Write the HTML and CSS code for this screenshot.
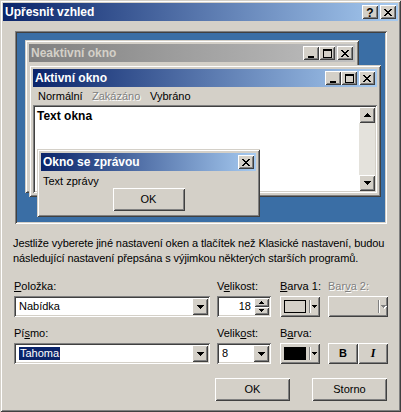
FILE: index.html
```html
<!DOCTYPE html>
<html lang="cs">
<head>
<meta charset="utf-8">
<title>Upřesnit vzhled</title>
<link rel="stylesheet" href="styles.css">
</head>
<body>
<div class="dialog">
  <div class="caption cap-active">
    <span class="cap-text">Upřesnit vzhled</span>
    <span class="cbtn cbtn-help">?</span>
    <span class="cbtn cbtn-close"><svg width="8" height="7" viewBox="0 0 8 7"><path d="M0 0h2v1h-2zM6 0h2v1h-2zM1 1h2v1h-2zM5 1h2v1h-2zM2 2h4v1h-4zM3 3h2v1h-2zM2 4h4v1h-4zM1 5h2v1h-2zM5 5h2v1h-2zM0 6h2v1h-2zM6 6h2v1h-2z"/></svg></span>
  </div>
  <div class="client">
    <div class="preview">
      <div class="desktop">
        <div class="win win-inactive">
          <div class="caption cap-inactive">
            <span class="cap-text">Neaktivní okno</span>
            <span class="cbtn"><svg width="9" height="9" viewBox="0 0 9 9"><path d="M1 7h6v2h-6z"/></svg></span>
            <span class="cbtn"><svg width="9" height="9" viewBox="0 0 9 9"><path fill-rule="evenodd" d="M0 0h9v9h-9zM1 2v6h7v-6z"/></svg></span>
            <span class="cbtn cbtn-close"><svg width="8" height="7" viewBox="0 0 8 7"><path d="M0 0h2v1h-2zM6 0h2v1h-2zM1 1h2v1h-2zM5 1h2v1h-2zM2 2h4v1h-4zM3 3h2v1h-2zM2 4h4v1h-4zM1 5h2v1h-2zM5 5h2v1h-2zM0 6h2v1h-2zM6 6h2v1h-2z"/></svg></span>
          </div>
        </div>
        <div class="win win-active">
          <div class="caption cap-active">
            <span class="cap-text">Aktivní okno</span>
            <span class="cbtn"><svg width="9" height="9" viewBox="0 0 9 9"><path d="M1 7h6v2h-6z"/></svg></span>
            <span class="cbtn"><svg width="9" height="9" viewBox="0 0 9 9"><path fill-rule="evenodd" d="M0 0h9v9h-9zM1 2v6h7v-6z"/></svg></span>
            <span class="cbtn cbtn-close"><svg width="8" height="7" viewBox="0 0 8 7"><path d="M0 0h2v1h-2zM6 0h2v1h-2zM1 1h2v1h-2zM5 1h2v1h-2zM2 2h4v1h-4zM3 3h2v1h-2zM2 4h4v1h-4zM1 5h2v1h-2zM5 5h2v1h-2zM0 6h2v1h-2zM6 6h2v1h-2z"/></svg></span>
          </div>
          <div class="menubar">
            <span class="mi mi-1">Normální</span>
            <span class="mi mi-2 is-disabled">Zakázáno</span>
            <span class="mi mi-3">Vybráno</span>
          </div>
          <div class="textbox">
            <div class="textbox-text">Text okna</div>
            <div class="vscroll">
              <span class="sbtn"><svg width="7" height="4" viewBox="0 0 7 4"><path d="M3 0h1v1h1v1h1v1h1v1h-7v-1h1v-1h1v-1h1z"/></svg></span>
              <span class="track"></span>
              <span class="sbtn"><svg width="7" height="4" viewBox="0 0 7 4"><path d="M0 0h7v1h-1v1h-1v1h-1v1h-1v-1h-1v-1h-1v-1h-1z"/></svg></span>
            </div>
          </div>
        </div>
        <div class="win win-msg">
          <div class="caption cap-active">
            <span class="cap-text">Okno se zprávou</span>
            <span class="cbtn cbtn-close"><svg width="8" height="7" viewBox="0 0 8 7"><path d="M0 0h2v1h-2zM6 0h2v1h-2zM1 1h2v1h-2zM5 1h2v1h-2zM2 2h4v1h-4zM3 3h2v1h-2zM2 4h4v1h-4zM1 5h2v1h-2zM5 5h2v1h-2zM0 6h2v1h-2zM6 6h2v1h-2z"/></svg></span>
          </div>
          <div class="msg-body">
            <div class="msg-text">Text zprávy</div>
            <div class="msg-actions"><span class="btn msg-ok">OK</span></div>
          </div>
        </div>
      </div>
    </div>

    <p class="desc">Jestliže vyberete jiné nastavení oken a tlačítek než Klasické nastavení, budou<br>následující nastavení přepsána s výjimkou některých starších programů.</p>

    <div class="form">
      <div class="field">
        <span class="lbl"><u>P</u>oložka:</span>
        <div class="combo combo-wide">
          <span class="combo-val">Nabídka</span>
          <span class="dd"><svg width="7" height="4" viewBox="0 0 7 4"><path d="M0 0h7v1h-1v1h-1v1h-1v1h-1v-1h-1v-1h-1v-1h-1z"/></svg></span>
        </div>
      </div>
      <div class="field">
        <span class="lbl">V<u>e</u>likost:</span>
        <div class="spin">
          <span class="spin-val">18</span>
          <span class="spin-btns">
            <span class="sp"><svg width="5" height="3" viewBox="0 0 5 3"><path d="M2 0h1v1h1v1h1v1h-5v-1h1v-1h1z"/></svg></span>
            <span class="sp"><svg width="5" height="3" viewBox="0 0 5 3"><path d="M0 0h5v1h-1v1h-1v1h-1v-1h-1v-1h-1z"/></svg></span>
          </span>
        </div>
      </div>
      <div class="field">
        <span class="lbl"><u>B</u>arva 1:</span>
        <div class="btn colorbtn">
          <span class="swatch"></span><span class="sep"></span>
          <svg class="carrow" width="5" height="3" viewBox="0 0 5 3"><path d="M0 0h5v1h-1v1h-1v1h-1v-1h-1v-1h-1z"/></svg>
        </div>
      </div>
      <div class="field">
        <span class="lbl is-disabled">Bar<u>v</u>a 2:</span>
        <div class="btn colorbtn colorbtn-off">
          <span class="sep"></span>
          <svg class="carrow" width="6" height="4" viewBox="0 0 6 4"><path fill="#fff" d="M1 1h5v1h-1v1h-1v1h-1v-1h-1v-1h-1z"/><path fill="#808080" d="M0 0h5v1h-1v1h-1v1h-1v-1h-1v-1h-1z"/></svg>
        </div>
      </div>

      <div class="field">
        <span class="lbl">Pí<u>s</u>mo:</span>
        <div class="combo combo-wide">
          <span class="combo-val"><span class="sel">Tahoma</span></span>
          <span class="dd"><svg width="7" height="4" viewBox="0 0 7 4"><path d="M0 0h7v1h-1v1h-1v1h-1v1h-1v-1h-1v-1h-1v-1h-1z"/></svg></span>
        </div>
      </div>
      <div class="field">
        <span class="lbl">Velik<u>o</u>st:</span>
        <div class="combo combo-small">
          <span class="combo-val">8</span>
          <span class="dd"><svg width="7" height="4" viewBox="0 0 7 4"><path d="M0 0h7v1h-1v1h-1v1h-1v1h-1v-1h-1v-1h-1v-1h-1z"/></svg></span>
        </div>
      </div>
      <div class="field">
        <span class="lbl">B<u>a</u>rva:</span>
        <div class="btn colorbtn">
          <span class="swatch swatch-black"></span><span class="sep"></span>
          <svg class="carrow" width="5" height="3" viewBox="0 0 5 3"><path d="M0 0h5v1h-1v1h-1v1h-1v-1h-1v-1h-1z"/></svg>
        </div>
      </div>
      <div class="field">
        <span class="lbl"></span>
        <div class="style-btns">
          <span class="btn style-btn style-b">B</span>
          <span class="btn style-btn style-i">I</span>
        </div>
      </div>
    </div>

    <div class="actions">
      <span class="btn action-btn">OK</span>
      <span class="btn action-btn">Storno</span>
    </div>
  </div>
</div>
</body>
</html>
```

FILE: styles.css
```css
* { box-sizing: border-box; }
html, body { margin: 0; padding: 0; }
body {
  width: 401px;
  height: 412px;
  overflow: hidden;
  background: #d4d0c8;
  color: #000;
  font-family: "Liberation Sans", Arial, sans-serif;
  font-size: 11px;
  line-height: 13px;
}

/* ---------- 3D edges ---------- */
.dialog, .win {
  box-shadow: inset 1px 1px #d4d0c8, inset -1px -1px #404040, inset 2px 2px #fff, inset -2px -2px #808080;
}
.btn, .cbtn, .sbtn, .sp, .dd {
  background: #d4d0c8;
  box-shadow: inset 1px 1px #fff, inset -1px -1px #404040, inset 2px 2px #d4d0c8, inset -2px -2px #808080;
}
.preview, .combo, .spin, .textbox {
  box-shadow: inset 1px 1px #808080, inset -1px -1px #fff, inset 2px 2px #404040, inset -2px -2px #d4d0c8;
}

/* ---------- dialog ---------- */
.dialog {
  width: 401px;
  height: 412px;
  padding: 3px;
  background: #d4d0c8;
  display: flex;
  flex-direction: column;
}

.caption {
  height: 18px;
  flex: none;
  display: flex;
  align-items: center;
  padding-left: 2px;
  font-weight: bold;
  font-size: 12px;
}
.cap-active { background: linear-gradient(to right, #0a246a, #a6caf0); color: #fff; }
.cap-inactive { background: linear-gradient(to right, #808080, #c0c0c0); color: #d4d0c8; }
.cap-text { flex: 1; white-space: nowrap; overflow: hidden; }

.cbtn {
  width: 16px;
  height: 14px;
  flex: none;
  display: flex;
  align-items: center;
  justify-content: center;
  color: #000;
}
.cbtn svg { display: block; fill: #000; }
.cbtn-close { margin-left: 2px; margin-right: 2px; }
.cbtn-help { font-size: 12px; font-weight: bold; line-height: 14px; padding-top: 1px; }

.client {
  flex: 1;
  display: flex;
  flex-direction: column;
  padding-top: 10px;
}

/* ---------- preview ---------- */
.preview {
  margin-left: 12px;
  width: 372px;
  height: 193px;
  padding: 2px;
  flex: none;
}
.desktop {
  position: relative;
  width: 100%;
  height: 100%;
  background: #3a6ea5;
  overflow: hidden;
}
.win {
  position: absolute;
  padding: 4px;
  background: #d4d0c8;
  display: flex;
  flex-direction: column;
}
.win-inactive { left: 8px; top: 7px; width: 334px; height: 153px; }
.win-active { left: 12px; top: 32px; width: 352px; height: 132px; }
.win-msg { left: 20px; top: 116px; width: 223px; height: 68px; }

.menubar {
  height: 18px;
  flex: none;
  display: flex;
  align-items: center;
}
.mi { padding-left: 5px; white-space: nowrap; }
.mi-1 { width: 54px; }
.mi-2 { width: 58px; }
.is-disabled { color: #808080; text-shadow: 1px 1px #fff; }

.textbox {
  flex: 1;
  background: #fff;
  padding: 2px;
  display: flex;
}
.textbox-text {
  flex: 1;
  font-weight: bold;
  font-size: 12px;
  padding: 3px 0 0 2px;
}
.vscroll {
  width: 16px;
  display: flex;
  flex-direction: column;
}
.sbtn {
  width: 16px;
  height: 16px;
  display: flex;
  align-items: center;
  justify-content: center;
}
.sbtn svg { display: block; fill: #000; }
.track { flex: 1; background: #e4e2dc; }

.msg-body {
  flex: 1;
  display: flex;
  flex-direction: column;
  padding-top: 4px;
}
.msg-text { padding-left: 2px; height: 13px; }
.msg-actions { display: flex; justify-content: center; }
.msg-ok {
  width: 72px;
  height: 23px;
  display: flex;
  align-items: center;
  justify-content: center;
}

/* ---------- description ---------- */
.desc {
  margin: 12px 0 0 10px;
  line-height: 15px;
  white-space: nowrap;
  letter-spacing: -0.1px;
}

/* ---------- form ---------- */
.form {
  margin-top: 14px;
  padding-left: 11px;
  display: grid;
  grid-template-columns: 203px 63px 48px 60px;
  row-gap: 10px;
}
.field {
  display: flex;
  flex-direction: column;
  gap: 3px;
}
.lbl { height: 13px; white-space: nowrap; }
.lbl u { text-decoration-thickness: 1px; text-underline-offset: 1px; }

.combo, .spin {
  height: 21px;
  background: #fff;
  padding: 2px;
  display: flex;
  align-items: stretch;
}
.combo-wide { width: 196px; }
.combo-small { width: 54px; }
.combo-val {
  flex: 1;
  display: flex;
  align-items: center;
  padding-left: 3px;
  white-space: nowrap;
}
.sel { background: #0a246a; color: #fff; padding: 0 1px; line-height: 13px; }
.dd {
  width: 16px;
  display: flex;
  align-items: center;
  justify-content: center;
}
.dd svg { display: block; fill: #000; }

.spin { width: 54px; }
.spin-val {
  flex: 1;
  display: flex;
  align-items: center;
  justify-content: flex-end;
  padding-right: 3px;
}
.spin-btns { width: 15px; display: flex; flex-direction: column; }
.sp {
  flex: 1;
  display: flex;
  align-items: center;
  justify-content: center;
}
.sp svg { display: block; fill: #000; }

.colorbtn {
  width: 40px;
  height: 21px;
  display: flex;
  align-items: center;
  padding-left: 4px;
}
.colorbtn-off { width: 60px; padding-left: 47px; }
.swatch {
  width: 22px;
  height: 13px;
  border: 1px solid #000;
  background: #d4d0c8;
}
.swatch-black { background: #000; }
.sep {
  width: 2px;
  height: 13px;
  margin-left: 3px;
  border-left: 1px solid #808080;
  border-right: 1px solid #fff;
}
.carrow { display: block; margin-left: 1px; fill: #000; }

.style-btns { display: flex; }
.style-btn {
  width: 30px;
  height: 21px;
  display: flex;
  align-items: center;
  justify-content: center;
  font-weight: bold;
}
.style-i {
  font-family: "Liberation Serif", "Times New Roman", serif;
  font-style: italic;
  font-size: 12px;
}

/* ---------- actions ---------- */
.actions {
  margin-top: 14px;
  padding-right: 11px;
  display: flex;
  justify-content: flex-end;
  gap: 22px;
}
.action-btn {
  width: 75px;
  height: 23px;
  display: flex;
  align-items: center;
  justify-content: center;
}
```
